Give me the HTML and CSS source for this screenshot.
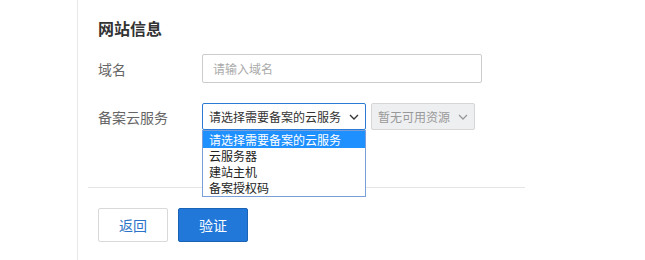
FILE: index.html
```html
<!DOCTYPE html>
<html lang="zh-CN">
<head>
<meta charset="utf-8">
<title>网站信息</title>
<link rel="stylesheet" href="styles.css">
</head>
<body>
<div class="page">
  <div class="gutter"></div>
  <div class="main">
    <h2 class="title">网站信息</h2>
    <div class="row">
      <label class="label">域名</label>
      <div class="input">请输入域名</div>
    </div>
    <div class="row row-gap">
      <label class="label">备案云服务</label>
      <div class="select-wrap">
        <div class="select focused">
          <span>请选择需要备案的云服务</span>
          <svg class="chev" width="10" height="6" viewBox="0 0 10 6"><path d="M1 1l4 4 4-4" fill="none" stroke="#333" stroke-width="1.3"/></svg>
        </div>
        <ul class="menu">
          <li class="active">请选择需要备案的云服务</li>
          <li>云服务器</li>
          <li>建站主机</li>
          <li>备案授权码</li>
        </ul>
      </div>
      <div class="select disabled">
        <span>暂无可用资源</span>
        <svg class="chev" width="10" height="6" viewBox="0 0 10 6"><path d="M1 1l4 4 4-4" fill="none" stroke="#999" stroke-width="1.3"/></svg>
      </div>
    </div>
    <div class="divider"></div>
    <div class="actions">
      <button class="btn btn-default">返回</button>
      <button class="btn btn-primary">验证</button>
    </div>
  </div>
</div>
</body>
</html>
```
FILE: styles.css
```css
* { box-sizing: border-box; }
body {
  margin: 0;
  background: #fff;
  font-family: "Noto Sans CJK SC", "Noto Sans", sans-serif;
  color: #333;
}
.page {
  display: flex;
  height: 260px;
}
.gutter { width: 77px; flex: none; }
.main {
  flex: 1;
  border-left: 1px solid #e8e8e8;
  padding: 16px 0 0 20px;
}
.title {
  margin: 0;
  font-size: 16px;
  line-height: 24px;
  font-weight: bold;
  color: #333;
}
.row {
  display: flex;
  align-items: center;
  margin-top: 14px;
}
.row-gap { margin-top: 20px; }
.label {
  width: 104px;
  font-size: 14px;
  color: #666;
}
.input {
  width: 280px;
  height: 29px;
  border: 1px solid #ccc;
  border-radius: 2px;
  padding-left: 10px;
  font-size: 12px;
  line-height: 27px;
  color: #aaa;
}
.select-wrap { position: relative; }
.select {
  display: flex;
  align-items: center;
  justify-content: space-between;
  height: 27px;
  border: 1px solid #ccc;
  border-radius: 2px;
  padding: 0 6px 0 6px;
  font-size: 12px;
  color: #333;
}
.select.focused {
  width: 164px;
  border-color: #2a7ad6;
}
.select.disabled {
  width: 104px;
  margin-left: 5px;
  background: #eeeff1;
  color: #999;
  border-color: #d6d6d6;
}
.chev { flex: none; }
.menu {
  position: absolute;
  top: 100%;
  left: 0;
  width: 164px;
  margin: 0;
  padding: 0;
  list-style: none;
  background: #fff;
  border: 1px solid #7a9ed8;
  font-size: 12px;
  color: #222;
}
.menu li {
  height: 16px;
  line-height: 16px;
  padding-left: 6px;
}
.menu li.active {
  height: 17px;
  line-height: 17px;
  background: #1e90ff;
  color: #fff;
}
.divider {
  margin: 57px 0 0 -10px;
  width: 437px;
  height: 1px;
  background: #e5e5e5;
}
.actions {
  display: flex;
  gap: 10px;
  margin-top: 20px;
}
.btn {
  width: 70px;
  height: 34px;
  border-radius: 2px;
  font-family: inherit;
  font-size: 14px;
  padding: 0;
  cursor: pointer;
}
.btn-default {
  background: #fff;
  border: 1px solid #d9d9d9;
  color: #2b73c9;
}
.btn-primary {
  background: #2178d9;
  border: 1px solid #1a62b6;
  color: #fff;
}
```
